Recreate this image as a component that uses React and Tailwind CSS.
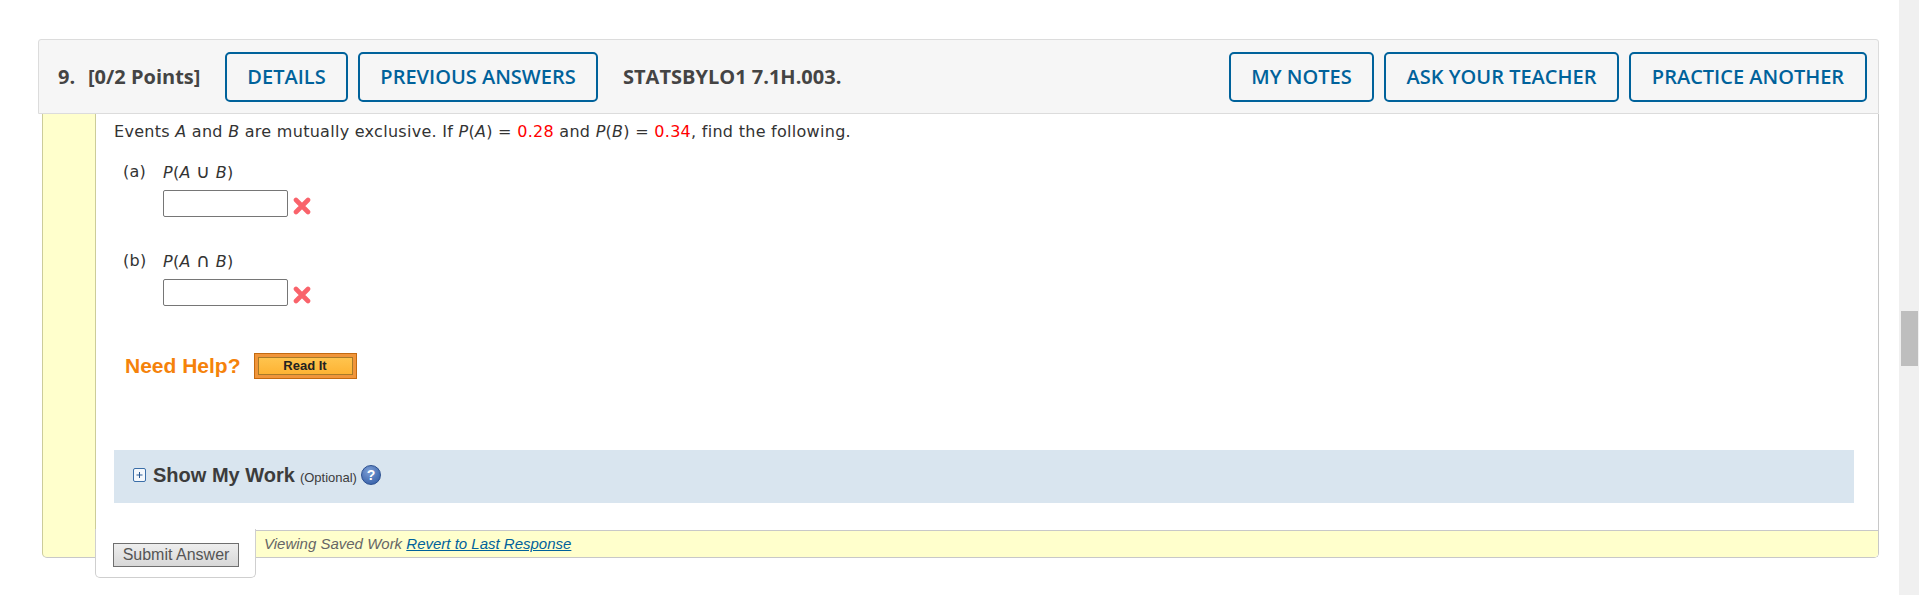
function HeaderButton({ children, className }) {
  return (
    <button className={"h-[50px] rounded-[5px] border-2 border-[#00629b] text-[#00629b] text-[20px] font-semibold font-['Open_Sans',sans-serif] bg-transparent " + className}>
      {children}
    </button>
  )
}

function RedX() {
  return (
    <svg width="18" height="18" viewBox="0 0 18 18" className="ml-[5px] mt-[5px]">
      <path d="M3 3 L15 15 M15 3 L3 15" stroke="#f9636b" strokeWidth="4.6" strokeLinecap="round" />
    </svg>
  )
}

function Part({ label, symbol, className }) {
  return (
    <div className={className}>
      <div className="flex h-[20px] text-[16px] tracking-[0.28px] leading-[20px] text-[#333]">
        <span className="w-[49px] pl-[9px]">{label}</span>
        <span><i>P</i>(<i>A</i> <span className="text-[19px] leading-none">{symbol}</span> <i>B</i>)</span>
      </div>
      <div className="flex items-center ml-[49px] mt-[8px]">
        <input className="w-[125px] h-[27px] border border-[#767676] rounded-[2px] bg-white" />
        <RedX />
      </div>
    </div>
  )
}

export default function App() {
  return (
    <div className="flex h-[595px] overflow-hidden bg-white font-['DejaVu_Sans',sans-serif]">
      <div className="flex-1 pl-[38px] pr-[20px] pt-[39px]">
        <div className="flex items-center h-[75px] bg-[#f6f6f6] border border-[#dcdcdc] rounded-t-[3px] pl-[19px] pr-[11px] font-['Open_Sans',sans-serif]">
          <span className="text-[20px] font-bold text-[#444] w-[30px]">9.</span>
          <span className="text-[20px] font-bold text-[#444] w-[137px]">[0/2 Points]</span>
          <HeaderButton className="w-[123px]">DETAILS</HeaderButton>
          <HeaderButton className="w-[240px] ml-[10px]">PREVIOUS ANSWERS</HeaderButton>
          <span className="ml-[25px] text-[20px] font-bold text-[#444]">STATSBYLO1 7.1H.003.</span>
          <div className="flex-1" />
          <HeaderButton className="w-[145px]">MY NOTES</HeaderButton>
          <HeaderButton className="w-[235px] ml-[10px]">ASK YOUR TEACHER</HeaderButton>
          <HeaderButton className="w-[238px] ml-[10px]">PRACTICE ANOTHER</HeaderButton>
        </div>

        <div className="ml-[4px] h-[444px] flex bg-[#ffffcc] border-x border-b border-[#cccc99] border-r-[#c8c8c8] border-b-[#c8c8c8] rounded-b-[5px]">
          <div className="w-[52px]" />
          <div className="flex-1 flex flex-col bg-white border-l border-[#cccc99] rounded-br-[4px]">
            <div className="h-[416px] pl-[18px] pr-[24px] pt-[8px]">
              <p className="text-[16px] tracking-[0.28px] leading-[20px] text-[#333]">
                Events <i>A</i> and <i>B</i> are mutually exclusive. If <i>P</i>(<i>A</i>) = <span className="text-[#ff0000]">0.28</span> and <i>P</i>(<i>B</i>) = <span className="text-[#ff0000]">0.34</span>, find the following.
              </p>
              <Part label="(a)" symbol="∪" className="mt-[20px]" />
              <Part label="(b)" symbol="∩" className="mt-[34px]" />
              <div className="flex items-center h-[32px] mt-[44px] ml-[11px]">
                <span className="font-['Liberation_Sans',sans-serif] font-bold text-[21px] text-[#f5820a]">Need Help?</span>
                <button className="ml-[13px] w-[103px] h-[26px] p-[3px] bg-[#f0953a] border border-[#c46a10]">
                  <span className="flex items-center justify-center h-full bg-gradient-to-b from-[#ffc44d] to-[#fdb333] border border-[#a87a28] font-['Liberation_Sans',sans-serif] font-bold text-[13px] text-[#222]">Read It</span>
                </button>
              </div>
              <div className="flex items-center h-[53px] mt-[68px] pl-[19px] pb-[3px] bg-[#d9e5ef] font-['Liberation_Sans',sans-serif]">
                <svg width="13" height="14" viewBox="0 0 13 14">
                  <rect x="0.5" y="0.5" width="12" height="13" rx="1.5" fill="#f4f8fc" stroke="#3a6ea8" />
                  <path d="M3.5 7 H9.5 M6.5 4 V10" stroke="#2a5a94" strokeWidth="1" />
                </svg>
                <span className="ml-[7px] font-bold text-[20px] text-[#3c3c3c]">Show My Work</span>
                <span className="ml-[5px] text-[13px] text-[#3c3c3c] mt-[6px]">(Optional)</span>
                <span className="ml-[4px] flex items-center justify-center w-[20px] h-[20px] rounded-full border border-[#2b4f8f] bg-[radial-gradient(circle_at_40%_30%,#7d9fd6,#2a55a0)] text-white font-bold text-[14px]">?</span>
              </div>
            </div>
            <div className="flex h-[27px]">
              <div className="w-[161px] -ml-[1px] h-[49px] relative -top-[1px] flex items-start bg-white border-x border-b border-[#cfcfcf] rounded-b-[5px] pl-[17px] pt-[14px]">
                <button className="w-[126px] h-[24px] border border-[#6f6f6f] bg-gradient-to-b from-[#eeeeee] to-[#d8d8d8] font-['Liberation_Sans',sans-serif] text-[16px] text-[#555] leading-none">Submit Answer</button>
              </div>
              <div className="flex-1 border-t border-[#c8c8c8] bg-[#ffffcc] rounded-br-[4px] pl-[8px] font-['Liberation_Sans',sans-serif] italic text-[15px] leading-[25px] text-[#666]">
                Viewing Saved Work <a className="text-[#00629b] underline">Revert to Last Response</a>
              </div>
            </div>
          </div>
        </div>
      </div>

      <div className="w-[20px] bg-[#f0f0f0] pt-[311px] pl-[2px] pr-[1px]">
        <div className="h-[55px] bg-[#bebebe]" />
      </div>
    </div>
  )
}
